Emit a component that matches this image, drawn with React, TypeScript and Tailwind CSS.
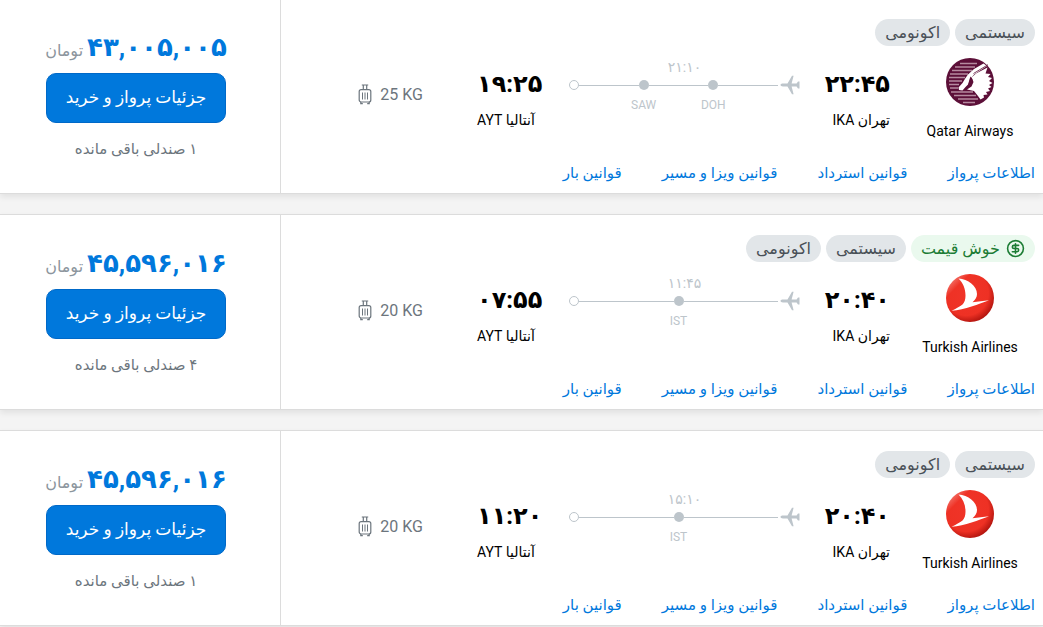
import { Fragment } from 'react';
import { CircleDollarSign } from 'lucide-react';

interface Flight {
  id: number;
  airline: 'Qatar Airways' | 'Turkish Airlines';
  goodPrice?: boolean;
  departure: string;
  arrival: string;
  duration: string;
  stops: string[];
  baggage: string;
  price: string;
  seats: string;
}

const flights: Flight[] = [
  {
    id: 1,
    airline: 'Qatar Airways',
    departure: '۲۲:۴۵',
    arrival: '۱۹:۲۵',
    duration: '۲۱:۱۰',
    stops: ['DOH', 'SAW'],
    baggage: '25 KG',
    price: '۴۳,۰۰۵,۰۰۵',
    seats: '۱',
  },
  {
    id: 2,
    airline: 'Turkish Airlines',
    goodPrice: true,
    departure: '۲۰:۴۰',
    arrival: '۰۷:۵۵',
    duration: '۱۱:۴۵',
    stops: ['IST'],
    baggage: '20 KG',
    price: '۴۵,۵۹۶,۰۱۶',
    seats: '۴',
  },
  {
    id: 3,
    airline: 'Turkish Airlines',
    departure: '۲۰:۴۰',
    arrival: '۱۱:۲۰',
    duration: '۱۵:۱۰',
    stops: ['IST'],
    baggage: '20 KG',
    price: '۴۵,۵۹۶,۰۱۶',
    seats: '۱',
  },
];

const links = ['اطلاعات پرواز', 'قوانین استرداد', 'قوانین ویزا و مسیر', 'قوانین بار'];

function QatarLogo() {
  return (
    <svg viewBox="0 0 48 48" className="size-12" aria-hidden="true">
      <circle cx="24" cy="24" r="24" fill="#5c0f38" />
      <path
        d="M14 5.500h17M9 9h20M6 12.500h20M4 16h18M3 19.500h16M3 23h13M3 26.500h10M4 30h8M5 34h22M8 37.500h22M12 41h20M17 44.500h12"
        stroke="#b58a9f"
        strokeWidth="1.300"
      />
      <path d="M37.500 5.500 28 11 22 16.500 19.500 20 16.500 25 12.500 29.500 13 32 16.500 32.500 19.500 29 22 26.500 24.500 21 28 16.500 41 8z" fill="#fff" />
      <path d="M41.500 9.500 30 15.500 25.500 19.500 27.500 24 25.500 28.500 21 31.500 28 33 32 38 34.500 41.500 38 39.500 37.500 37 41.500 36.500 40 34 44 33 42 30.500 45.500 29 43 27 46.500 25 43 23 46 20 42 19 44.500 16 39.500 15.500z" fill="#fff" />
      <path d="M24.500 18.500c3.500 3 3 8-2.800 11 .8-3 .8-6.500 2.800-11z" fill="#5c0f38" />
      <path d="M42 6.700 27.500 15.500" stroke="#5c0f38" strokeWidth=".8" />
    </svg>
  );
}

function TurkishLogo() {
  return (
    <svg viewBox="0 0 48 48" className="size-12" aria-hidden="true">
      <defs>
        <radialGradient id="turkish-red" cx=".42" cy=".4" r=".62">
          <stop offset="0" stopColor="#f03428" />
          <stop offset=".75" stopColor="#ee3124" />
          <stop offset="1" stopColor="#b3150f" />
        </radialGradient>
        <linearGradient id="turkish-shine" x1="0" y1="0" x2=".5" y2=".5">
          <stop offset=".2" stopColor="#fff" stopOpacity=".35" />
          <stop offset=".5" stopColor="#fff" stopOpacity="0" />
        </linearGradient>
      </defs>
      <circle cx="24" cy="24" r="24" fill="url(#turkish-red)" />
      <circle cx="24" cy="24" r="24" fill="url(#turkish-shine)" />
      <path d="M12.500 4.500C22 5 31 12 31 20c0 3-1.500 5.500-4.500 8.200l16.500-2C33 30 19 35.500 5.500 36.800 10 34.500 14 32.500 16.500 30.500c2-2 3-5 3-9 0-7-2.500-12.500-7-17z" fill="#fff" />
    </svg>
  );
}

function PlaneIcon() {
  return (
    <svg viewBox="0 0 20 20" className="ml-0.5 size-5 shrink-0" fill="#bdc5cb" aria-hidden="true">
      <path d="M.5 10C.5 9.200 1.500 8.600 3 8.600h4.500L12 .8h1.600L11.600 8.600h5L18 6.500h1.500v7H18l-1.400-2.100h-5l2 7.800H12L7.500 11.400H3C1.500 11.400.5 10.800.5 10z" />
    </svg>
  );
}

function SuitcaseIcon() {
  return (
    <svg viewBox="0 0 14 21" className="h-[21px] w-3.5" fill="none" stroke="#6c757d" strokeWidth="1.200" aria-hidden="true">
      <path d="M3.800 1h6.400M5.300 1.500v4M8.700 1.500v4" />
      <rect x="1.200" y="5.600" width="11.600" height="12.400" rx="2" />
      <path d="M4.500 8.500v7M7 8.500v7M9.500 8.500v7" strokeWidth="1" />
      <path d="M2.800 18v1.700h2M11.200 18v1.700h-2" />
    </svg>
  );
}

function Route({ duration, stops }: { duration: string; stops: string[] }) {
  return (
    <div className="flex-1 pt-px text-[#bdc5cb]">
      <p className="text-center text-sm leading-4">{duration}</p>
      <div className="flex items-start">
        <PlaneIcon />
        {stops.map((stop) => (
          <Fragment key={stop}>
            <span className="mt-2.5 h-px flex-1 bg-[#bdc5cb]" />
            <span className="mt-[5px] flex w-2.5 flex-col items-center">
              <span className="size-2.5 rounded-full bg-[#bdc5cb]" />
              <span className="mt-[7px] text-xs leading-4">{stop}</span>
            </span>
          </Fragment>
        ))}
        <span className="mt-2.5 h-px flex-1 bg-[#bdc5cb]" />
        <span className="mt-[5px] size-2.5 rounded-full border border-[#bdc5cb] bg-white" />
      </div>
    </div>
  );
}

function FlightCard({ flight }: { flight: Flight }) {
  return (
    <article className="flex border-y border-[#dcdcdc] bg-white shadow-[0_3px_6px_rgba(0,0,0,0.08)]">
      <div className="min-w-0 flex-1 px-2 pt-5">
        <div className="flex gap-[5px] text-base leading-[27px] text-[#495057]">
          {flight.goodPrice && (
            <span className="flex items-center gap-1.5 rounded-full bg-[#eaf9ee] px-2.5 text-[#1c7c34]">
              <CircleDollarSign size={19} strokeWidth={2} />
              خوش قیمت
            </span>
          )}
          <span className="rounded-full bg-[#e2e6e9] px-2.5">سیستمی</span>
          <span className="rounded-full bg-[#e2e6e9] px-2.5">اکونومی</span>
        </div>

        <div className="flex h-[101px] pt-3 text-black">
          <div className="flex w-[130px] flex-col items-center">
            {flight.airline === 'Qatar Airways' ? <QatarLogo /> : <TurkishLogo />}
            <p className="mt-3.5 text-sm leading-[22px]">{flight.airline}</p>
          </div>
          <div className="mr-[15px] w-[90px] pt-2.5">
            <p className="text-2xl leading-8 font-bold">{flight.departure}</p>
            <p className="mt-2 text-sm leading-6">تهران IKA</p>
          </div>
          <Route duration={flight.duration} stops={flight.stops} />
          <div className="flex w-[92px] flex-col items-end pt-2.5">
            <p className="text-2xl leading-8 font-bold">{flight.arrival}</p>
            <p className="mt-2 text-sm leading-6">آنتالیا AYT</p>
          </div>
          <div className="w-[188px] pt-[26px] pr-[54px] text-[#6c757d]">
            <span className="flex items-center justify-end gap-2" dir="ltr">
              <SuitcaseIcon />
              <span className="text-base leading-5 whitespace-nowrap">{flight.baggage}</span>
            </span>
          </div>
        </div>

        <nav className="mt-3.5 mb-2 flex gap-10 text-[15px] leading-6 text-[#0078dc]">
          {links.map((link) => (
            <a key={link} href="#" className="whitespace-nowrap">
              {link}
            </a>
          ))}
        </nav>
      </div>

      <aside className="flex w-[281px] shrink-0 flex-col items-center border-r border-[#dcdcdc] pt-8 pr-2">
        <p className="flex items-baseline gap-1 leading-8 whitespace-nowrap">
          <span className="text-[26px] leading-8 font-bold text-[#0078dc]">{flight.price}</span>
          <span className="text-base text-[#8c959d]">تومان</span>
        </p>
        <button
          type="button"
          className="mt-2.5 h-[50px] w-[180px] rounded-[10px] border border-[#0069c8] bg-[#0078dc] text-[17px] text-white"
        >
          جزئیات پرواز و خرید
        </button>
        <p className="mt-3.5 text-[15px] leading-6 text-[#6c757d]">{flight.seats} صندلی باقی مانده</p>
      </aside>
    </article>
  );
}

export default function App() {
  return (
    <main
      dir="rtl"
      className="min-h-screen overflow-hidden bg-[#f4f4f4] font-['Roboto','DejaVu_Sans',sans-serif]"
    >
      <div className="-mt-0.5 flex flex-col gap-5">
        {flights.map((flight) => (
          <FlightCard key={flight.id} flight={flight} />
        ))}
      </div>
    </main>
  );
}
